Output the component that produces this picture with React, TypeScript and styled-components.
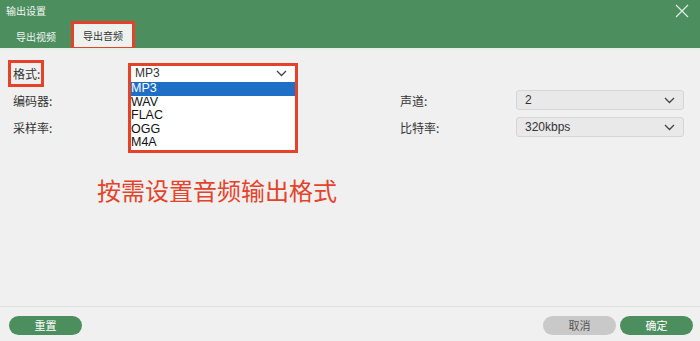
import React from "react";
import styled, { createGlobalStyle } from "styled-components";

const GlobalStyle = createGlobalStyle`
  html, body { margin: 0; padding: 0; }
  body {
    font-family: "Noto Sans CJK SC", "Noto Sans", "Liberation Sans", sans-serif;
    background: #f0f0f0;
  }
`;

const GREEN = "#4d8e5f";
const MARK = "#e4432a";

const Dialog = styled.div`
  width: 700px;
  height: 341px;
  display: flex;
  flex-direction: column;
  background: #f0f0f0;
  overflow: hidden;
`;

const Header = styled.header`
  background: ${GREEN};
  border-bottom: 2px solid #e6eee8;
  display: flex;
  flex-direction: column;
`;

const TitleBar = styled.div`
  height: 21px;
  display: flex;
  align-items: center;
  justify-content: space-between;
  padding: 0 6px;
  color: #f2f7f3;
  font-size: 10px;
`;

const CloseBtn = styled.button`
  border: 0;
  background: none;
  padding: 0;
  width: 14px;
  height: 14px;
  display: flex;
  margin-right: 5px;
  margin-top: 1px;
  cursor: pointer;
`;

const Tabs = styled.nav`
  height: 27px;
  display: flex;
  align-items: stretch;
  gap: 3px;
  padding-left: 4px;
`;

const Tab = styled.a<{ $active?: boolean }>`
  display: flex;
  align-items: center;
  padding: 0 9px;
  font-size: 10px;
  text-decoration: none;
  color: ${(p) => (p.$active ? "#333" : "#eef5f0")};
  background: ${(p) => (p.$active ? "#eef2ef" : "transparent")};
  border: 3px solid ${(p) => (p.$active ? MARK : "transparent")};
  border-bottom-width: ${(p) => (p.$active ? "1px" : "0")};
`;

const Body = styled.main`
  flex: 1;
  padding: 13px 16px 0 13px;
`;

const Form = styled.div`
  display: grid;
  grid-template-columns: 117px 166px 104px 116px 168px;
  grid-auto-rows: 20px;
  row-gap: 7px;
  align-items: center;
`;

const Label = styled.span<{ $marked?: boolean }>`
  font-size: 12px;
  color: #333;
  justify-self: start;
  ${(p) =>
    p.$marked &&
    `
    margin-left: -5px;
    padding: 2px 1px 2px 2px;
    border: 3px solid ${MARK};
  `}
`;

const Cell = styled.div`
  position: relative;
  height: 100%;
`;

const Select = styled.div<{ $light?: boolean }>`
  height: 100%;
  box-sizing: border-box;
  display: flex;
  align-items: center;
  justify-content: space-between;
  padding: 0 8px 0 ${(p) => (p.$light ? "4px" : "8px")};
  font-family: "Liberation Sans", "Noto Sans CJK SC", sans-serif;
  font-size: 12px;
  color: #333;
  background: ${(p) => (p.$light ? "#fff" : "#e9e9e9")};
  border: 1px solid ${(p) => (p.$light ? "#fff" : "#d6d6d6")};
  border-radius: ${(p) => (p.$light ? "0" : "3px")};
`;

const Marker = styled.div`
  position: absolute;
  left: -2px;
  right: -2px;
  top: 0;
  height: 90px;
  border: 3px solid ${MARK};
  box-sizing: border-box;
  pointer-events: none;
  z-index: 3;
`;

const Menu = styled.ul`
  position: absolute;
  left: 0;
  right: 0;
  top: 19px;
  margin: 0;
  padding: 0;
  list-style: none;
  background: #fff;
  z-index: 2;
  height: 69px;
  font-family: "Liberation Sans", sans-serif;
  font-size: 12.5px;
`;

const MenuItem = styled.li<{ $selected?: boolean }>`
  height: 13.6px;
  line-height: 13.6px;
  padding-left: 1px;
  color: ${(p) => (p.$selected ? "#fff" : "#111")};
  background: ${(p) => (p.$selected ? "#1f6fc6" : "transparent")};
`;

const Note = styled.p`
  margin: 37px 0 0 84px;
  font-size: 24px;
  line-height: 32px;
  color: ${MARK};
`;

const Footer = styled.footer`
  height: 34px;
  border-top: 1px solid #e0e0e0;
  display: flex;
  align-items: center;
  padding: 0 7px 0 9px;
  gap: 4px;
`;

const Button = styled.button<{ $tone?: "green" | "gray" }>`
  width: 73px;
  height: 19px;
  border: 0;
  border-radius: 10px;
  font-family: inherit;
  font-size: 11px;
  padding: 0;
  color: ${(p) => (p.$tone === "gray" ? "#555" : "#fff")};
  background: ${(p) => (p.$tone === "gray" ? "#c9c9c9" : GREEN)};
  margin-top: 2px;
`;

const Spacer = styled.div`
  flex: 1;
`;

const Chevron = () => (
  <svg width="11" height="7" viewBox="0 0 11 7" fill="none">
    <path d="M1 1l4.5 4.5L10 1" stroke="#444" strokeWidth="1.3" />
  </svg>
);

const formats = ["MP3", "WAV", "FLAC", "OGG", "M4A"];

export default function App() {
  return (
    <Dialog>
      <GlobalStyle />
      <Header>
        <TitleBar>
          <span>输出设置</span>
          <CloseBtn aria-label="close">
            <svg width="14" height="14" viewBox="0 0 14 14">
              <path d="M1 1l12 12M13 1L1 13" stroke="#dff0e4" strokeWidth="1.2" />
            </svg>
          </CloseBtn>
        </TitleBar>
        <Tabs>
          <Tab href="#">导出视频</Tab>
          <Tab href="#" $active>
            导出音频
          </Tab>
        </Tabs>
      </Header>

      <Body>
        <Form>
          <Label $marked>格式:</Label>
          <Cell>
            <Select $light>
              MP3
              <Chevron />
            </Select>
            <Menu>
              {formats.map((f, i) => (
                <MenuItem key={f} $selected={i === 0}>
                  {f}
                </MenuItem>
              ))}
            </Menu>
            <Marker />
          </Cell>
          <span />
          <span />
          <span />

          <Label>编码器:</Label>
          <Cell>
            <Select />
          </Cell>
          <span />
          <Label>声道:</Label>
          <Select>
            2
            <Chevron />
          </Select>

          <Label>采样率:</Label>
          <Cell>
            <Select />
          </Cell>
          <span />
          <Label>比特率:</Label>
          <Select>
            320kbps
            <Chevron />
          </Select>
        </Form>
        <Note>按需设置音频输出格式</Note>
      </Body>

      <Footer>
        <Button>重置</Button>
        <Spacer />
        <Button $tone="gray">取消</Button>
        <Button>确定</Button>
      </Footer>
    </Dialog>
  );
}
